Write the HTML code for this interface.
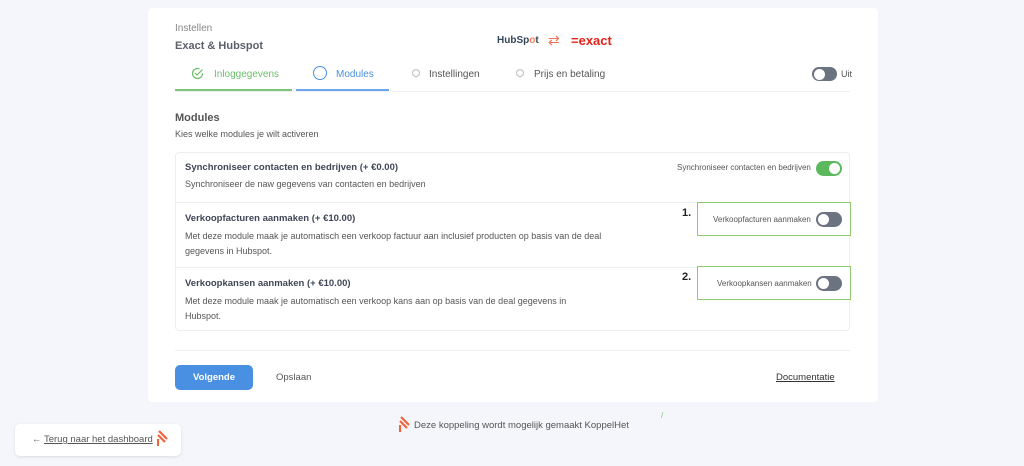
<!DOCTYPE html>
<html><head><meta charset="utf-8"><style>
*{box-sizing:border-box;margin:0;padding:0}
body{width:1024px;height:466px;background:#f4f6fb;font-family:"Liberation Sans",sans-serif;position:relative;overflow:hidden;color:#3f4656}
.abs{position:absolute}
.card{left:148px;top:8px;width:730px;height:394px;background:#fff;border-radius:4px}
.t{position:absolute;white-space:nowrap}
.tog{position:absolute;width:26px;height:15px;border-radius:8px;background:#6c7380}
.tog::after{content:"";position:absolute;left:2px;top:2px;width:11px;height:11px;border-radius:50%;background:#fff}
.tog.on{background:#5cb85c}.tog.on::after{left:13px}
.gb{position:absolute;border:1px solid #8fcb6c;background:#fff}
</style></head><body>
<div class="abs card"></div>
<div class="t" style="left:175px;top:23px;font-size:10px;color:#888">Instellen</div>
<div class="t" style="left:175px;top:40px;font-size:11px;font-weight:bold;color:#5a5f6a">Exact &amp; Hubspot</div>
<div class="t" style="left:497px;top:35px;font-size:10px;font-weight:bold;color:#33475b">HubSp<span style="color:#ff7a59">o</span>t</div>
<div class="t" style="left:548px;top:32px;font-size:14px;color:#f2745a">⇄</div>
<div class="t" style="left:571px;top:33px;font-size:13px;font-weight:bold;color:#e2231a">=exact</div>
<svg class="abs" style="left:191px;top:67px" width="13" height="13" viewBox="0 0 13 13"><path d="M11.5 6.5A5 5 0 1 1 8.5 1.9" fill="none" stroke="#6cbf6c" stroke-width="1.2"/><path d="M4 6l2 2 5.5-5.5" fill="none" stroke="#6cbf6c" stroke-width="1.2"/></svg>
<div class="t" style="left:214px;top:69px;font-size:10px;color:#6cbf6c">Inloggegevens</div>
<div class="abs" style="left:313px;top:66px;width:14px;height:14px;border:1.5px solid #4a90e2;border-radius:50%"></div>
<div class="t" style="left:336px;top:69px;font-size:10px;color:#4a90e2">Modules</div>
<div class="abs" style="left:412px;top:69px;width:8px;height:8px;border:1px solid #bbb;border-radius:50%"></div>
<div class="t" style="left:429px;top:69px;font-size:10px;color:#555">Instellingen</div>
<div class="abs" style="left:516px;top:69px;width:8px;height:8px;border:1px solid #bbb;border-radius:50%"></div>
<div class="t" style="left:534px;top:69px;font-size:10px;color:#555">Prijs en betaling</div>
<div class="tog" style="left:812px;top:67px;width:25px;height:14px"></div>
<div class="t" style="left:841px;top:69px;font-size:9px;color:#555">Uit</div>
<div class="abs" style="left:175px;top:91px;width:675px;height:1px;background:#eef0f4"></div>
<div class="abs" style="left:175px;top:89px;width:117px;height:2px;background:#7cc576"></div>
<div class="abs" style="left:296px;top:89px;width:93px;height:2px;background:#6aa6ee"></div>
<div class="t" style="left:175px;top:112px;font-size:11px;font-weight:bold;color:#555">Modules</div>
<div class="t" style="left:175px;top:129px;font-size:9px;color:#555">Kies welke modules je wilt activeren</div>
<div class="abs" style="left:175px;top:152px;width:675px;height:179px;border:1px solid #eceef2;border-radius:4px"></div>
<div class="abs" style="left:176px;top:202px;width:673px;height:1px;background:#eceef2"></div>
<div class="abs" style="left:176px;top:267px;width:673px;height:1px;background:#eceef2"></div>
<div class="t" style="left:185px;top:162px;font-size:9.5px;font-weight:bold;color:#3f4656">Synchroniseer contacten en bedrijven (+ €0.00)</div>
<div class="t" style="left:185px;top:179px;font-size:9px;color:#555">Synchroniseer de naw gegevens van contacten en bedrijven</div>
<div class="t" style="left:677px;top:163px;font-size:8px;color:#555">Synchroniseer contacten en bedrijven</div>
<div class="tog on" style="left:816px;top:161px"></div>
<div class="t" style="left:185px;top:213px;font-size:9.5px;font-weight:bold;color:#3f4656">Verkoopfacturen aanmaken (+ €10.00)</div>
<div class="t" style="left:185px;top:229px;font-size:9px;color:#555;line-height:15px;white-space:normal;width:420px">Met deze module maak je automatisch een verkoop factuur aan inclusief producten op basis van de deal gegevens in Hubspot.</div>
<div class="t" style="left:682px;top:207px;font-size:11px;font-weight:bold;color:#222">1.</div>
<div class="gb" style="left:697px;top:202px;width:154px;height:34px"></div>
<div class="t" style="left:713px;top:215px;font-size:8px;color:#555">Verkoopfacturen aanmaken</div>
<div class="tog" style="left:816px;top:212px"></div>
<div class="t" style="left:185px;top:278px;font-size:9.5px;font-weight:bold;color:#3f4656">Verkoopkansen aanmaken (+ €10.00)</div>
<div class="t" style="left:185px;top:294px;font-size:9px;color:#555;line-height:15px;white-space:normal;width:395px">Met deze module maak je automatisch een verkoop kans aan op basis van de deal gegevens in Hubspot.</div>
<div class="t" style="left:682px;top:271px;font-size:11px;font-weight:bold;color:#222">2.</div>
<div class="gb" style="left:697px;top:266px;width:154px;height:34px"></div>
<div class="t" style="left:717px;top:279px;font-size:8px;color:#555">Verkoopkansen aanmaken</div>
<div class="tog" style="left:816px;top:276px"></div>
<div class="abs" style="left:175px;top:350px;width:675px;height:1px;background:#eef0f4"></div>
<div class="abs" style="left:175px;top:365px;width:78px;height:25px;background:#4a90e2;border-radius:5px;color:#fff;font-size:9.5px;font-weight:bold;text-align:center;line-height:25px">Volgende</div>
<div class="t" style="left:276px;top:372px;font-size:9.5px;color:#555">Opslaan</div>
<div class="t" style="left:776px;top:372px;font-size:9.5px;color:#333;text-decoration:underline">Documentatie</div>
<div class="abs" style="left:15px;top:424px;width:166px;height:32px;background:#fff;border-radius:5px;box-shadow:0 1px 3px rgba(0,0,0,.1)"></div>
<div class="t" style="left:32px;top:434px;font-size:9.5px;color:#555">← <span style="text-decoration:underline">Terug naar het dashboard</span></div>
<svg class="abs" style="left:157px;top:430px" width="12" height="17" viewBox="0 0 12 17"><path d="M2 1l8 8M1 5l7 7M1 9v7" stroke="#f0643c" stroke-width="2.2" fill="none"/></svg>
<svg class="abs" style="left:399px;top:416px" width="12" height="17" viewBox="0 0 12 17"><path d="M2 1l8 8M1 5l7 7M1 9v7" stroke="#f0643c" stroke-width="2.2" fill="none"/></svg>
<div class="t" style="left:414px;top:420px;font-size:9.5px;color:#555">Deze koppeling wordt mogelijk gemaakt KoppelHet</div>
<div class="t" style="left:661px;top:411px;font-size:8px;color:#7cc576">/</div>
</body></html>
